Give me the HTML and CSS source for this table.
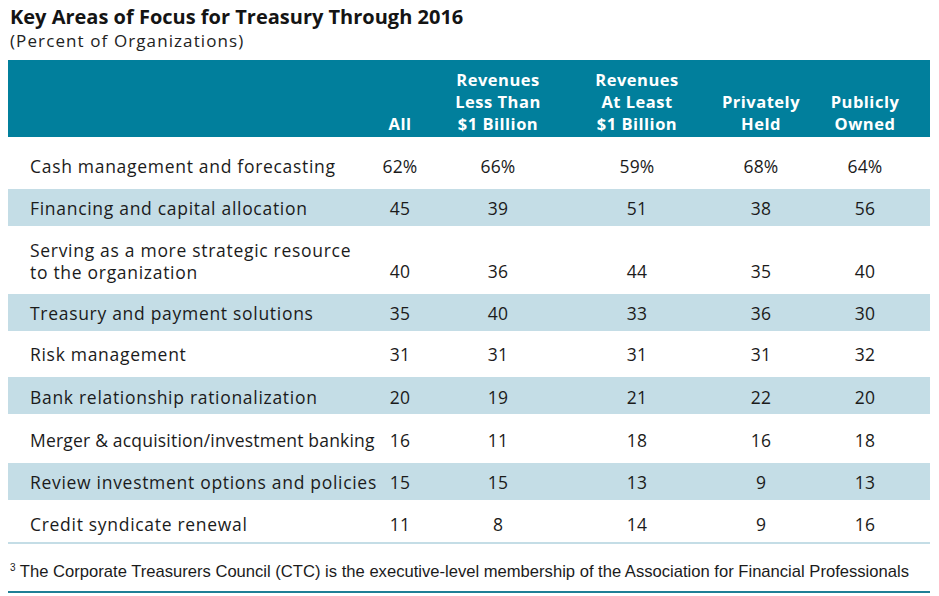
FILE: index.html
```html
<!DOCTYPE html>
<html lang="en">
<head>
<meta charset="utf-8">
<title>Key Areas of Focus for Treasury Through 2016</title>
<link rel="stylesheet" href="styles.css">
</head>
<body>
<div class="page">
  <h1 class="title">Key Areas of Focus for Treasury Through 2016</h1>
  <p class="subtitle">(Percent of Organizations)</p>
  <table class="data">
    <colgroup>
      <col class="c-label">
      <col class="c-all">
      <col class="c-less">
      <col class="c-least">
      <col class="c-priv">
      <col class="c-pub">
    </colgroup>
    <thead>
      <tr>
        <th class="lbl"></th>
        <th>All</th>
        <th>Revenues<br>Less Than<br>$1 Billion</th>
        <th>Revenues<br>At Least<br>$1 Billion</th>
        <th>Privately<br>Held</th>
        <th class="last">Publicly<br>Owned</th>
      </tr>
    </thead>
    <tbody>
      <tr class="first"><td class="lbl">Cash management and forecasting</td><td>62%</td><td>66%</td><td>59%</td><td>68%</td><td class="last">64%</td></tr>
      <tr class="alt"><td class="lbl">Financing and capital allocation</td><td>45</td><td>39</td><td>51</td><td>38</td><td class="last">56</td></tr>
      <tr class="tall"><td class="lbl two">Serving as a more strategic resource<br>to the organization</td><td class="num">40</td><td class="num">36</td><td class="num">44</td><td class="num">35</td><td class="num last">40</td></tr>
      <tr class="alt"><td class="lbl">Treasury and payment solutions</td><td>35</td><td>40</td><td>33</td><td>36</td><td class="last">30</td></tr>
      <tr class="plain"><td class="lbl">Risk management</td><td>31</td><td>31</td><td>31</td><td>31</td><td class="last">32</td></tr>
      <tr class="alt low"><td class="lbl">Bank relationship rationalization</td><td>20</td><td>19</td><td>21</td><td>22</td><td class="last">20</td></tr>
      <tr class="plain wide"><td class="lbl">Merger &amp; acquisition/investment banking</td><td>16</td><td>11</td><td>18</td><td>16</td><td class="last">18</td></tr>
      <tr class="alt"><td class="lbl">Review investment options and policies</td><td>15</td><td>15</td><td>13</td><td>9</td><td class="last">13</td></tr>
      <tr class="final"><td class="lbl">Credit syndicate renewal</td><td>11</td><td>8</td><td>14</td><td>9</td><td class="last">16</td></tr>
    </tbody>
  </table>
  <p class="footnote"><sup>3</sup> The Corporate Treasurers Council (CTC) is the executive-level membership of the Association for Financial Professionals</p>
</div>
</body>
</html>
```

FILE: styles.css
```css
html, body {
  margin: 0;
  padding: 0;
  background: #ffffff;
}

body {
  font-family: "Open Sans", "Liberation Sans", sans-serif;
  color: #1b1b1b;
}

.page {
  width: 922px;
  padding: 0 0 0 8px;
}

.title {
  margin: 0;
  padding: 6px 0 0 2px;
  font-size: 20px;
  line-height: 22px;
  font-weight: 700;
  color: #141414;
}

.subtitle {
  margin: 0;
  padding: 3px 0 0 2px;
  font-size: 17px;
  line-height: 19px;
  letter-spacing: 1.1px;
  color: #222222;
  height: 29px;
}

.data {
  width: 922px;
  border-collapse: collapse;
  table-layout: fixed;
}

.c-label { width: 362px; }
.c-all { width: 60px; }
.c-less { width: 136px; }
.c-least { width: 142px; }
.c-priv { width: 106px; }
.c-pub { width: 116px; }

.data th {
  background: #017f9c;
  color: #ffffff;
  font-weight: 700;
  font-size: 16.5px;
  letter-spacing: 0.5px;
  line-height: 22px;
  height: 77px;
  padding: 0 0 2px 0;
  vertical-align: bottom;
  text-align: center;
  box-sizing: border-box;
}

.data td {
  font-size: 17.5px;
  letter-spacing: 0.2px;
  line-height: 20px;
  text-align: center;
  padding: 0;
  vertical-align: middle;
  box-sizing: border-box;
}

.data th.last,
.data td.last {
  padding-right: 14px;
}

.data td.lbl {
  text-align: left;
  padding-left: 22px;
  letter-spacing: 0.7px;
  white-space: nowrap;
}

.data td.lbl.two { line-height: 22px; }

.data tr.wide td.lbl { letter-spacing: 0.2px; }

.data tr.first td { height: 52px; padding-top: 5px; }
.data tr.alt td { height: 37px; background: #c4dde6; }
.data tr.alt.low td { padding-top: 2px; }
.data tr.tall td { height: 68px; padding-top: 1px; }
.data tr.tall td.num { padding-top: 22px; }
.data tr.plain td { height: 46px; }
.data tr.plain.wide td { height: 49px; padding-top: 2px; }
.data tr.final td { height: 43px; padding-top: 6px; border-bottom: 2px solid #c4dde6; }

.footnote {
  margin: 0;
  padding: 18px 0 0 2px;
  height: 29px;
  line-height: 20px;
  font-family: "Liberation Sans", "Open Sans", sans-serif;
  font-size: 16.6px;
  color: #1b1b1b;
  border-bottom: 2px solid #1f7f96;
}

.footnote sup {
  font-size: 10px;
  vertical-align: 6px;
  line-height: 0;
}
```
